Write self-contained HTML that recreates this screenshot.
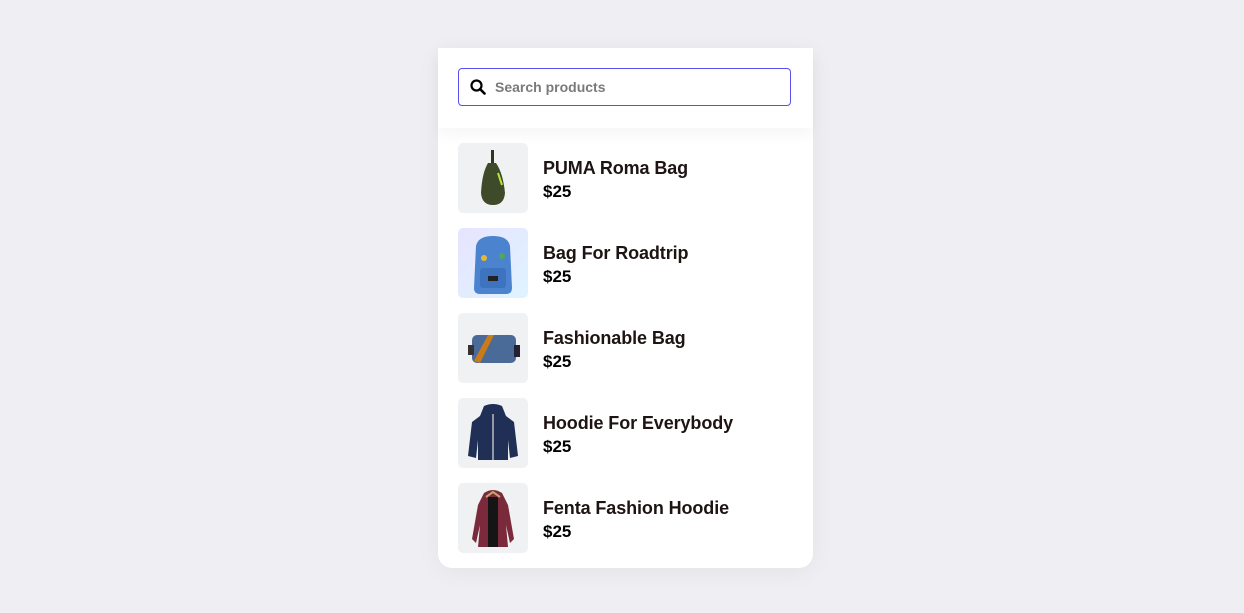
<!DOCTYPE html>
<html><head><style>
body{margin:0;width:1244px;height:613px;background:#efeff3;font-family:"Liberation Sans",sans-serif;position:relative;overflow:hidden}
.card{position:absolute;left:438px;top:48px;width:375px;height:520px;background:#fff;border-radius:0 0 14px 14px;box-shadow:0 4px 24px rgba(0,0,0,0.05)}
.head{position:absolute;left:0;top:0;width:375px;height:80px;background:#fff;box-shadow:0 6px 14px rgba(0,0,0,0.04)}
.search{position:absolute;left:20px;top:20px;width:331px;height:36px;border:1px solid #5a4ff3;border-radius:4px}
.search span{position:absolute;left:36px;top:10px;font-size:14px;font-weight:bold;color:#7a7a7a}
.row{position:absolute;left:20px;width:340px;height:70px}
.img{position:absolute;left:0;top:0;width:70px;height:70px;background:#f0f1f3;border-radius:5px;overflow:hidden}
.t{position:absolute;left:85px;top:15px;font-size:18px;font-weight:bold;color:#1e1414;letter-spacing:-0.1px}
.p{position:absolute;left:85px;top:39px;font-size:17px;font-weight:bold;color:#000}
</style></head><body>
<div class="card">
<div class="head"><div class="search">
<svg style="position:absolute;left:11px;top:10px" width="16" height="16" viewBox="0 0 16 16"><circle cx="6.5" cy="6.5" r="5" fill="none" stroke="#000" stroke-width="2.2"/><line x1="10" y1="10" x2="14.5" y2="14.5" stroke="#000" stroke-width="2.6" stroke-linecap="round"/></svg>
<span>Search products</span></div></div>

<div class="row" style="top:95px"><div class="img"><svg width="70" height="70"><rect x="33" y="7" width="3" height="14" fill="#2f3520"/><path d="M30 20 Q24 30 23 50 Q24 62 35 62 Q46 62 47 50 Q45 30 38 20Z" fill="#3f4a2a"/><path d="M40 30 L44 42" stroke="#b8e43a" stroke-width="2"/></svg></div><div class="t">PUMA Roma Bag</div><div class="p">$25</div></div>

<div class="row" style="top:180px"><div class="img" style="background:linear-gradient(135deg,#e7e4ff,#dff3ff)"><svg width="70" height="70"><path d="M18 18 Q20 8 35 8 Q50 8 52 18 L54 60 Q54 66 48 66 L22 66 Q16 66 16 60Z" fill="#4b83cf"/><rect x="22" y="40" width="26" height="20" rx="3" fill="#3e74bf"/><rect x="30" y="48" width="10" height="5" fill="#222"/><circle cx="26" cy="30" r="3" fill="#e5b833"/><circle cx="44" cy="28" r="3" fill="#4caa55"/></svg></div><div class="t">Bag For Roadtrip</div><div class="p">$25</div></div>

<div class="row" style="top:265px"><div class="img"><svg width="70" height="70"><rect x="14" y="22" width="44" height="28" rx="5" fill="#4a6b98"/><path d="M16 48 L30 22 L36 22 L22 50Z" fill="#c97b1a"/><rect x="10" y="32" width="6" height="10" fill="#333"/><rect x="56" y="32" width="6" height="12" fill="#223"/></svg></div><div class="t">Fashionable Bag</div><div class="p">$25</div></div>

<div class="row" style="top:350px"><div class="img"><svg width="70" height="70"><path d="M26 8 Q35 4 44 8 L48 18 L56 24 L60 58 L52 60 L50 42 L50 62 L20 62 L20 42 L18 60 L10 58 L14 24 L22 18Z" fill="#1f2f55"/><line x1="35" y1="16" x2="35" y2="62" stroke="#bbb" stroke-width="1.5"/></svg></div><div class="t">Hoodie For Everybody</div><div class="p">$25</div></div>

<div class="row" style="top:435px"><div class="img"><svg width="70" height="70"><path d="M26 10 Q35 4 44 10 L50 22 L56 56 L52 60 L48 42 L50 64 L20 64 L22 42 L18 60 L14 56 L20 22Z" fill="#7a2a3a"/><path d="M30 14 L40 14 L40 64 L30 64Z" fill="#151515"/><path d="M28 14 L35 9 L42 14" stroke="#c8a26a" stroke-width="2" fill="none"/></svg></div><div class="t">Fenta Fashion Hoodie</div><div class="p">$25</div></div>
</div>
</body></html>
